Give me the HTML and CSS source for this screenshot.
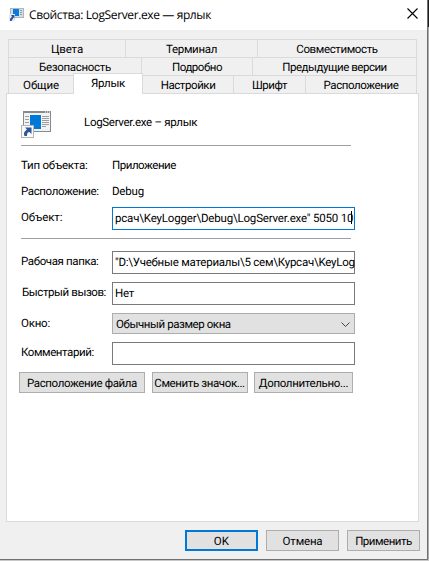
FILE: index.html
```
<!DOCTYPE html>
<html lang="ru">
<head>
<meta charset="utf-8">
<title>Свойства</title>
<link rel="stylesheet" href="styles.css">
</head>
<body>
<svg class="defs" width="0" height="0">
  <symbol id="app" viewBox="0 0 30 27">
    <rect x="2" y="0" width="28" height="21" fill="#858b90"/>
    <rect x="3" y="2" width="26" height="18" fill="#f2f2f2"/>
    <path d="M24 1h1M26 1h1M28 1h1" stroke="#fff"/>
    <path d="M4 5.5h4M4 8.5h4M4 11.5h4M21 5.5h7M21 7.5h7M21 9.5h7M21 11.5h7M21 13.5h7M21 15.5h4" stroke="#9a9fa3"/>
    <rect x="9" y="4" width="11" height="14" fill="#0078d7"/>
    <rect x=".5" y="14.500" width="12" height="12" fill="#fafafa" stroke="#b5b5b5"/>
    <path d="M4 16.500h6.500v6.500l-2-2c-2 0-2.500 1.500-2.500 4H3.500c-1-3-.5-4 2.500-6.500z" fill="#2b5797"/>
  </symbol>
</svg>
<div class="screen">
  <div class="window">
    <header class="titlebar">
      <svg class="small-icon" viewBox="0 0 15 13" width="15" height="13">
        <rect x="1" width="14" height="10" fill="#aeb7be"/>
        <rect x="2" y="1" width="12" height="8" fill="#d3dde5"/>
        <rect x="4" y="1" width="6" height="7" fill="#0a7bdc"/>
        <path d="M11 2.500h2M11 4.500h2M11 6.500h2" stroke="#8fa0ad"/>
        <rect y="6" width="6" height="7" fill="#e6eaf0"/>
        <path d="M2 7h3.500v3.500l-1-1L2.500 13H1V11l2-2.500z" fill="#2b5797"/>
      </svg>
      <span class="caption">Свойства: LogServer.exe — ярлык</span>
      <svg class="close" viewBox="0 0 11 11" width="11" height="11"><path d="M.5.5l10 10M10.500.5l-10 10" stroke="#000" stroke-width="1.100"/></svg>
    </header>
    <nav class="tabs">
      <div class="row row-a"><span class="t40">Цвета</span><span class="t60">Терминал</span><span class="t65">Совместимость</span></div>
      <div class="row row-b"><span class="t55">Безопасность</span><span class="t75">Подробно</span><span class="t75">Предыдущие версии</span></div>
      <div class="row row-c"><span class="t40">Общие</span><span class="active t60">Ярлык</span><span class="t70">Настройки</span><span class="t70">Шрифт</span><span class="t70">Расположение</span></div>
    </nav>
    <main class="panel">
      <div class="head"><svg width="30" height="27"><use href="#app"/></svg><span class="t55">LogServer.exe – ярлык</span></div>
      <hr>
      <dl class="info">
        <dt class="t50">Тип объекта:</dt><dd class="t75">Приложение</dd>
        <dt class="t65">Расположение:</dt><dd class="t45">Debug</dd>
        <dt class="t35">Объект:</dt><dd class="field focus t45">рсач\KeyLogger\Debug\LogServer.exe" 5050 10<i class="caret"></i></dd>
      </dl>
      <hr>
      <dl class="form">
        <dt class="t65">Рабочая папка:</dt><dd class="field path">"D:\Учебные материалы\5 сем\Курсач\KeyLog</dd>
        <dt class="t70 nudge">Быстрый вызов:</dt><dd class="field t50">Нет</dd>
        <dt class="t50">Окно:</dt><dd class="select t70">Обычный размер окна<svg width="9" height="5"><path d="M.5.5l4 4 4-4" fill="none" stroke="#444"/></svg></dd>
        <dt class="t70">Комментарий:</dt><dd class="field"></dd>
      </dl>
      <div class="actions"><span class="btn t65">Расположение файла</span><span class="btn t65">Сменить значок...</span><span class="btn t60">Дополнительно...</span></div>
    </main>
    <footer class="footer"><span class="btn default">OK</span><span class="btn t45">Отмена</span><span class="btn t75">Применить</span></footer>
  </div>
</div>
</body>
</html>
```
FILE: styles.css
```
* { box-sizing: border-box; }
body {
  margin: 0;
  font: 11.5px/16px Roboto, "Liberation Sans", sans-serif;
  color: #000;
  text-rendering: geometricPrecision;
}
.defs { display: block; }
.screen {
  width: 429px;
  height: 561px;
  background: linear-gradient(90deg, transparent 427px, #aaa 427px) 0 27px / 100% 532px no-repeat,
    linear-gradient(#1a1a1a 27px, #c8c8c8 27px);
}
.window {
  width: 428px;
  height: 560px;
  background: #f0f0f0;
  border-right: 1px solid #707070;
  border-bottom: 1px solid #707070;
}
.titlebar {
  display: flex;
  align-items: center;
  height: 30px;
  padding: 0 9px;
  background: #fff;
}
.small-icon { margin-top: -1px; }
.caption {
  margin-left: 5px;
  font-size: 12px;
  font-family: "Open Sans", sans-serif;
  letter-spacing: -0.38px;
}
.close { margin: -3px 0 0 auto; }
.tabs { padding: 9px 0 0 8px; }
.row {
  display: grid;
  width: 409px;
  height: 18px;
  border-top: 1px solid #dadada;
  border-right: 1px solid #dadada;
}
.row span {
  border-left: 1px solid #dadada;
  text-align: center;
  line-height: 18px;
}
.row-a { grid-template-columns: 117px 132px 1fr; }
.row-b { grid-template-columns: 133px 111px 1fr; }
.row-c { grid-template-columns: 65px 69px 91px 72px 1fr; }
.row .active {
  height: 21px;
  margin-top: -3px;
  margin-right: -1px;
  background: #fff;
  border-top: 1px solid #dadada;
  border-right: 1px solid #dadada;
  z-index: 1;
  line-height: 19px;
}
.panel {
  width: 413px;
  height: 429px;
  margin-left: 6px;
  padding: 17px 0 0 14px;
  background: #fff;
  border: 1px solid #dadada;
}
.head {
  display: flex;
  height: 34px;
}
.head span { margin: 3px 0 0 33px; }
hr {
  width: 330px;
  height: 1px;
  margin: 0;
  border: 0;
  background: #a0a0a0;
}
dl {
  display: grid;
  grid-template-columns: 91px 243px;
  margin: 0;
}
dt, dd { margin: 0; white-space: pre; }
.info {
  height: 92px;
  padding-top: 11px;
  grid-template-rows: 26px 24px 23px;
}
.info dt:nth-of-type(3) { padding-top: 2px; }
.form {
  height: 133px;
  padding-top: 12px;
  grid-template-rows: 23px 23px 21px 23px;
  row-gap: 8px;
}
.form dt { padding-top: 2px; }
.nudge { margin-left: 1px; }
.field {
  height: 23px;
  padding: 2px;
  border: 1px solid #7a7a7a;
  position: relative;
}
.path { letter-spacing: -0.23px; }
.focus { border-color: #0078d7; }
.caret {
  position: absolute;
  right: 2px;
  top: 3px;
  width: 1px;
  height: 13px;
  background: #000;
}
.select {
  display: flex;
  align-items: center;
  justify-content: space-between;
  height: 21px;
  padding: 1px 4px 0 3px;
  background: #e1e1e1;
  border: 1px solid #adadad;
}
.btn {
  height: 21px;
  background: #e1e1e1;
  border: 1px solid #adadad;
  text-align: center;
  line-height: 20px;
  white-space: nowrap;
}
.actions {
  display: grid;
  grid-template-columns: 126px 96px 99px;
  column-gap: 6.5px;
  margin-left: -2px;
}
.footer {
  display: grid;
  grid-template-columns: repeat(3, 73px);
  column-gap: 8px;
  padding: 8px 0 0 185px;
}
.default {
  border: 2px solid #0078d7;
  line-height: 18px;
  letter-spacing: 0.3px;
}
.t35 { letter-spacing: -0.08px; }
.t40 { letter-spacing: -0.13px; }
.t45 { letter-spacing: -0.18px; }
.t50 { letter-spacing: -0.22px; }
.t55 { letter-spacing: -0.3px; }
.t60 { letter-spacing: -0.33px; }
.t65 { letter-spacing: -0.38px; }
.t70 { letter-spacing: -0.42px; }
.t75 { letter-spacing: -0.47px; }
```
